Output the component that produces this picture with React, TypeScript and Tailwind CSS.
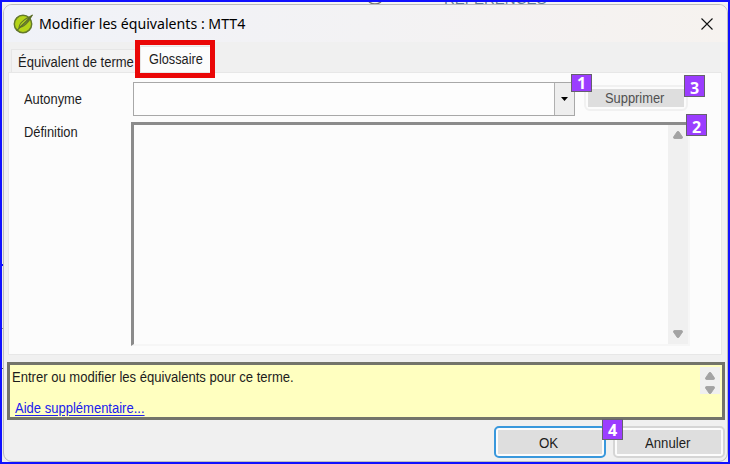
import React from "react";

function Txt({ children, className = "" }: { children: React.ReactNode; className?: string }) {
  return (
    <span className={`inline-block origin-left whitespace-nowrap text-[14px] leading-4 ${className}`}>{children}</span>
  );
}

function Arrow({ down = false, className = "" }: { down?: boolean; className?: string }) {
  return (
    <svg viewBox="0 0 10 8" className={`h-2 w-[10px] ${down ? "rotate-180" : ""} ${className}`}>
      <path d="M4.3 .5H5.7L9.3 5.8Q9.8 7.5 8.8 7.5H1.2Q.2 7.5 .7 5.8Z" fill="#a3a3a3" stroke="#a3a3a3" strokeWidth=".9" strokeLinejoin="round" />
    </svg>
  );
}

function Badge({ n, className }: { n: number; className: string }) {
  return (
    <div className={`absolute z-20 flex w-[21px] items-center justify-center border border-[#66616d] bg-[#9b3dff] font-['Open_Sans',sans-serif] text-[16px] leading-none font-bold text-white ${className}`}>
      {n}
    </div>
  );
}

function Leaf() {
  return (
    <svg viewBox="0 0 22 22" className="h-[22px] w-[22px]">
      <circle cx="10" cy="11" r="8.7" fill="#b5d418" stroke="#64792b" strokeWidth="1.5" />
      <path d="M5.5 15.5C5.5 10 10 6 19.8 1.5C17.5 7.5 13 14 7 14.7Z" fill="#65772b" />
      <path d="M6.5 13.7C7.5 10.5 10.5 7.5 14.5 5.5L15 6.2Z" fill="#b5d61e" />
      <path d="M8 13.2 15.2 6.2C13.5 9.8 11 12.5 8 13.2Z" fill="#9fbd20" />
      <path d="M3.8 17.7 19.5 2" stroke="#5c6d2c" strokeWidth="1.1" />
    </svg>
  );
}

export default function App() {
  return (
    <div className="relative h-[464px] w-[730px] overflow-hidden border-2 border-[#1010ff] bg-[#eeeeee] pl-px font-['Liberation_Sans',Arial,sans-serif] text-[#1c1c1c]">
      <div className="flex h-[2px] overflow-hidden bg-[#f4f4f4]">
        <svg viewBox="0 0 16 2" className="ml-[364px] h-[2px] w-4">
          <path d="M2 0Q8 4 14 0" fill="none" stroke="#777" strokeWidth="1.5" />
        </svg>
        <span className="mt-[-11px] ml-[61px] text-[15px] leading-4 text-[#607d98]">RÉFÉRENCES</span>
      </div>
      <div className="absolute top-[262px] left-0 h-[2px] w-[2px] bg-[#1010ff]" />
      <div className="absolute top-[326px] left-0 h-px w-[2px] bg-[#888]" />
      <div className="absolute top-[366px] left-0 h-px w-[2px] bg-[#555]" />

      <div className="relative flex h-[458px] w-[725px] flex-col overflow-hidden rounded-[9px] border border-[#bcbcbc] bg-[#f0f0f0]">
        <header className="flex h-[37px] shrink-0 items-center bg-linear-to-r from-[#f0f2f8] via-[#f3f2f4] to-[#f6f2ef] pl-[9px]">
          <Leaf />
          <h1 className="ml-1 origin-left scale-x-[1.01] whitespace-nowrap font-['Noto_Sans',sans-serif] text-[14px] leading-5 text-black">Modifier les équivalents : MTT4</h1>
          <svg viewBox="0 0 12 12" className="mr-[14px] ml-auto h-3 w-3">
            <path d="M.5.5 11.5 11.5M11.5.5.5 11.5" stroke="#111" strokeWidth="1.1" />
          </svg>
        </header>

        <nav className="flex h-[30px] shrink-0 items-end pl-[7px]">
          <div className="flex h-[23px] w-[125px] items-center border border-b-0 border-[#e6e6e6] bg-[#f3f3f3] pt-px pl-[6px]">
            <Txt className="scale-x-[.93]">Équivalent de terme</Txt>
          </div>
          <div className="relative z-10 ml-1 flex h-[26px] w-[72px] items-center border border-b-0 border-[#e6e6e6] bg-[#fcfcfc] pb-px pl-[8px]">
            <Txt className="scale-x-[.91]">Glossaire</Txt>
          </div>
        </nav>
        <div className="absolute top-[35px] left-[131px] z-20 h-[38px] w-[80px] border-[5px] border-[#ea0707]" />

        <main className="ml-[4px] h-[283px] w-[714px] shrink-0 border border-[#e7e7e7] bg-[#fcfcfc]">
          <div className="flex h-[49px] items-start pt-[9px] pl-[15px]">
            <label className="flex w-[109px] pt-[9px]"><Txt className="scale-x-[.92]">Autonyme</Txt></label>
            <div className="flex h-[34px] w-[442px] border border-[#a8a8a8] bg-[#fdfdfd]">
              <div className="flex-1" />
              <div className="flex w-[20px] items-center justify-center border-l border-[#b0b0b0] bg-[#eeeeee]">
                <svg viewBox="0 0 7 4" className="h-1 w-[7px]"><path d="M0 0H7L3.5 4Z" fill="#000" /></svg>
              </div>
            </div>
            <button className="mt-[3px] ml-[9px] h-[26px] w-[104px] rounded-md border-2 border-[#f1f1f1] bg-[#fcfcfc] p-[2px]">
              <span className="flex h-full items-center justify-center bg-[#dedede] pl-[2px] text-[#505050]"><Txt className="origin-center scale-x-[.92]">Supprimer</Txt></span>
            </button>
          </div>
          <div className="flex items-start pl-[15px]">
            <label className="flex w-[107px] pt-[2px]"><Txt className="scale-x-[.92]">Définition</Txt></label>
            <div className="flex h-[224px] w-[559px] justify-end border-t-[3px] border-r-2 border-b-2 border-l-[3px] border-t-[#8b8b8b] border-r-[#f6f6f6] border-b-[#f6f6f6] border-l-[#8b8b8b]">
              <div className="flex w-[20px] flex-col items-center justify-between bg-[#f0f0f0] py-[6px]">
                <Arrow />
                <Arrow down />
              </div>
            </div>
          </div>
        </main>

        <section className="mt-[7px] ml-[3px] flex h-[58px] w-[718px] shrink-0 justify-between border-[3px] border-[#73746a] bg-[#ffffc0]">
          <div className="flex flex-col items-start pt-[4px] pl-[2px]">
            <Txt className="scale-x-[.933]">Entrer ou modifier les équivalents pour ce terme.</Txt>
            <a className="mt-[15px] ml-[3px] flex text-[#2020ee]"><Txt className="scale-x-[.93] underline underline-offset-2">Aide supplémentaire...</Txt></a>
          </div>
          <div className="mt-[2px] mr-[2px] flex h-[27px] w-[20px] flex-col items-center justify-between bg-[#f0f0f0] pt-[5px]">
            <Arrow />
            <Arrow down />
          </div>
        </section>

        <footer className="mt-[6px] flex shrink-0 gap-[7px] pl-[490px]">
          <button className="h-[32px] w-[112px] rounded-[5px] border-2 border-[#3998dc] bg-[#fcfcfc] p-[2px]">
            <span className="flex h-full items-center justify-center bg-[#dedede] pt-px pr-[2px]"><Txt className="origin-center scale-x-[.95]">OK</Txt></span>
          </button>
          <button className="h-[32px] w-[112px] rounded-[5px] border-2 border-[#d5d5d5] bg-[#fcfcfc] p-[2px]">
            <span className="flex h-full items-center justify-center bg-[#dedede] pt-px"><Txt className="origin-center scale-x-[.94]">Annuler</Txt></span>
          </button>
        </footer>
      </div>
      <Badge n={1} className="top-[72px] left-[569px] h-[18px]" />
      <Badge n={3} className="top-[73px] left-[682px] h-[22px] pt-[3px]" />
      <Badge n={2} className="top-[112px] left-[684px] h-[22px] pt-[3px]" />
      <Badge n={4} className="top-[417px] left-[600px] h-[21px] pt-px" />
    </div>
  );
}
